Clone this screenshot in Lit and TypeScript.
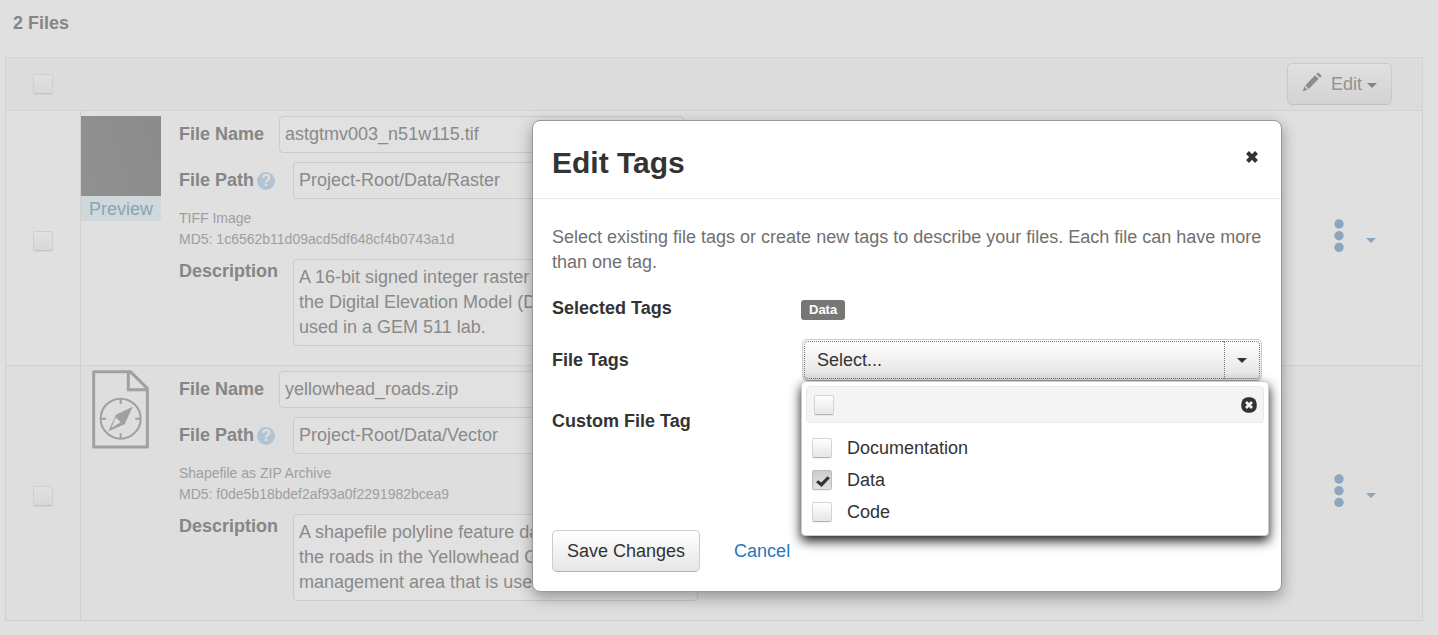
import { LitElement, html, css, svg } from "lit";
import { customElement, property, state } from "lit/decorators.js";
import { classMap } from "lit/directives/class-map.js";

interface FileEntry {
  id: string;
  name: string;
  path: string;
  format: string;
  md5: string;
  description: string;
  image: boolean;
}

const FILES: FileEntry[] = [
  {
    id: "raster",
    name: "astgtmv003_n51w115.tif",
    path: "Project-Root/Data/Raster",
    format: "TIFF Image",
    md5: "1c6562b11d09acd5df648cf4b0743a1d",
    description:
      "A 16-bit signed integer raster representing\nthe Digital Elevation Model (DEM) that is\nused in a GEM 511 lab.",
    image: true,
  },
  {
    id: "vector",
    name: "yellowhead_roads.zip",
    path: "Project-Root/Data/Vector",
    format: "Shapefile as ZIP Archive",
    md5: "f0de5b18bdef2af93a0f2291982bcea9",
    description:
      "A shapefile polyline feature dataset of\nthe roads in the Yellowhead Green\nmanagement area that is used in a lab.",
    image: false,
  },
];

const controls = css`
  * {
    box-sizing: border-box;
  }
  button,
  input,
  textarea {
    font: inherit;
    color: inherit;
    margin: 0;
  }
  .check {
    appearance: none;
    display: block;
    flex: none;
    width: 20px;
    height: 20px;
    border: 1px solid #d4d4d4;
    border-bottom-color: #b4b4b4;
    border-radius: 2px;
    background: linear-gradient(#ffffff, #e6e6e6);
    box-shadow: 0 1px 1px rgba(0, 0, 0, 0.05);
  }
  .check:checked {
    background: linear-gradient(#cccccc, #e2e2e2);
    border-color: #bcbcbc;
  }
  .check:checked::after {
    content: "";
    display: block;
    width: 14px;
    height: 11px;
    margin: 5px 0 0 3px;
    background: #333333;
    clip-path: polygon(0 56%, 16% 38%, 38% 58%, 82% 2%, 100% 18%, 40% 100%);
  }
  .caret {
    display: block;
    border: 5px solid transparent;
    border-top-color: currentColor;
    border-bottom: 0;
  }
`;

@customElement("file-table")
class FileTable extends LitElement {
  @property({ attribute: false }) files: FileEntry[] = [];

  static styles = [
    controls,
    css`
      :host {
        display: block;
      }
      .table {
        width: 100%;
        border-collapse: collapse;
        color: #888888;
      }
      .head,
      .row {
        border: 1px solid #d3d3d3;
      }
      .head {
        background: #dcdcdc;
        height: 53px;
      }
      .row:nth-child(even) {
        background: #dedede;
      }
      .row {
        border-color: #d0d0d0;
      }
      .cell {
        padding: 0;
        vertical-align: middle;
        text-align: left;
        font-weight: normal;
      }
      .cell-check {
        width: 75px;
      }
      .row .cell-check {
        border-right: 1px solid #d0d0d0;
        padding-top: 6px;
      }
      .check {
        margin: 0 auto;
        border-color: #cfcfcf;
        border-bottom-color: #c4c4c4;
        background: linear-gradient(#e1e1e1, #d8d8d8);
      }
      .cell-actions {
        width: 140px;
      }
      .row .cell-actions {
        padding-bottom: 4px;
      }
      .edit {
        display: flex;
        align-items: center;
        width: 105px;
        height: 42px;
        margin: 0 30px 0 auto;
        padding: 0 14px;
        border: 1px solid #cacaca;
        border-bottom-color: #c0c0c0;
        border-radius: 5px;
        background: linear-gradient(#e0e0e0, #d3d3d3);
        color: #929292;
      }
      .pencil {
        width: 20px;
        height: 20px;
        margin: 0 9px 4px 0;
        fill: #8c8c8c;
      }
      .edit .caret {
        margin: 2px 0 0 5px;
        color: #858585;
      }
      .menu {
        display: flex;
        align-items: center;
        gap: 22px;
        margin: 0 46px 0 auto;
        padding: 0;
        border: 0;
        background: none;
        color: #8ba6bf;
      }
      .menu .caret {
        margin-top: 9px;
      }
      .dots {
        width: 10px;
        height: 34px;
        fill: currentColor;
      }
      .entry {
        display: flex;
        gap: 18px;
        padding: 5px 0 19px;
      }
      .thumb {
        width: 80px;
        flex: none;
      }
      .picture {
        height: 80px;
        background: linear-gradient(70deg, #919191, #8b8b8b);
      }
      .preview {
        display: block;
        height: 25px;
        line-height: 26px;
        text-align: center;
        text-decoration: none;
        background: #cfd8db;
        color: #89a5b4;
      }
      .doc {
        display: block;
        width: 57px;
        height: 79px;
        margin: -1px auto 0 11px;
        fill: none;
        stroke: #a0a0a0;
      }
      .solid {
        fill: #a0a0a0;
        stroke: none;
      }
      .hole {
        fill: #dedede;
        stroke: none;
      }
      .line {
        display: flex;
        align-items: center;
        gap: 15px;
        margin-bottom: 9px;
      }
      .line-top {
        align-items: flex-start;
        margin: 9px 0 0;
      }
      .label {
        font-weight: bold;
        color: #868686;
      }
      .labelled {
        display: flex;
        align-items: center;
        gap: 3px;
        padding-right: 3px;
      }
      .help {
        display: grid;
        place-items: center;
        width: 18px;
        height: 18px;
        padding: 0;
        border: 0;
        border-radius: 50%;
        background: #b3c3d2;
        color: #e0e0e0;
        font-size: 16px;
        line-height: 18px;
        font-weight: bold;
      }
      .box {
        width: 405px;
        height: 37px;
        padding: 0 5px;
        border: 1px solid #cbcbcb;
        border-radius: 4px;
        background: #e1e1e1;
        color: #8a8a8a;
      }
      .area {
        display: block;
        height: 87px;
        padding: 5px;
        line-height: 25px;
        resize: none;
        overflow: hidden;
        white-space: pre;
      }
      .meta {
        margin: 0;
        font-size: 14px;
        line-height: 21px;
        color: #9e9e9e;
      }
    `,
  ];

  private thumb(file: FileEntry) {
    if (file.image) {
      return html`<div class="picture" role="img" aria-label=${file.name}></div>
        <a class="preview" href="#preview">Preview</a>`;
    }
    return html`<svg class="doc" viewBox="0 0 171 237" aria-hidden="true">
      ${svg`
        <path d="M5 5H115L166 55V231H5Z" stroke-width="9" stroke-linejoin="round" />
        <path d="M109 5V59H166" stroke-width="9" />
        <circle cx="86" cy="146" r="60" stroke-width="6" />
        <path d="M86 88V102M86 190V204M28 146H42M130 146H144" stroke-width="6" />
        <path class="solid" d="M122 110L98 163L49 184L72 134Z" />
        <path class="hole" d="M71 142L86 157L58 174Z" />
      `}
    </svg>`;
  }

  private row(file: FileEntry) {
    return html`<tr class="row">
      <td class="cell cell-check">
        <input class="check" type="checkbox" aria-label="Select ${file.name}" />
      </td>
      <td class="cell">
        <div class="entry">
          <div class="thumb">${this.thumb(file)}</div>
          <div>
            <div class="line">
              <label class="label" for="name-${file.id}">File Name</label>
              <input class="box" id="name-${file.id}" type="text" .value=${file.name} />
            </div>
            <div class="line">
              <div class="labelled">
                <label class="label" for="path-${file.id}">File Path</label>
                <button class="help" type="button">?</button>
              </div>
              <input class="box" id="path-${file.id}" type="text" .value=${file.path} />
            </div>
            <p class="meta">${file.format}</p>
            <p class="meta">MD5: ${file.md5}</p>
            <div class="line line-top">
              <label class="label" for="text-${file.id}">Description</label>
              <textarea class="box area" id="text-${file.id}" .value=${file.description}></textarea>
            </div>
          </div>
        </div>
      </td>
      <td class="cell cell-actions">
        <button class="menu" type="button" aria-label="Actions for ${file.name}">
          <svg class="dots" viewBox="0 0 10 34" aria-hidden="true">
            <circle cx="5" cy="5" r="4.7" />
            <circle cx="5" cy="16.7" r="4.7" />
            <circle cx="5" cy="28.4" r="4.7" />
          </svg>
          <span class="caret"></span>
        </button>
      </td>
    </tr>`;
  }

  render() {
    return html`<table class="table">
      <thead>
        <tr class="head">
          <th class="cell cell-check" scope="col">
            <input class="check" type="checkbox" aria-label="Select all files" />
          </th>
          <th class="cell" scope="col"></th>
          <th class="cell cell-actions" scope="col">
            <button class="edit" type="button">
              <svg class="pencil" viewBox="0 0 20 20" aria-hidden="true">
                <path d="M13 3.3L16.7 6.8L6.8 17L3.3 13.4Z" />
                <path d="M14.2 2L15.6 0.8Q16.2 0.6 16.8 1.1L19 3.3Q19.6 4 19.2 4.6L18 5.8Z" />
                <path d="M2.3 14.6L5.6 17.8L0.8 19.2Z" />
              </svg>
              <span>Edit</span>
              <span class="caret"></span>
            </button>
          </th>
        </tr>
      </thead>
      <tbody>
        ${this.files.map((file) => this.row(file))}
      </tbody>
    </table>`;
  }
}

@customElement("tag-dialog")
class TagDialog extends LitElement {
  @state() private tags = [
    { name: "Documentation", on: false },
    { name: "Data", on: true },
    { name: "Code", on: false },
  ];
  @state() private open = true;

  static styles = [
    controls,
    css`
      :host {
        display: block;
      }
      .dialog {
        border: 1px solid #999999;
        border-radius: 8px;
        background: #ffffff;
        box-shadow: 0 5px 15px rgba(0, 0, 0, 0.35);
        color: #333333;
      }
      .header {
        display: flex;
        justify-content: space-between;
        align-items: flex-start;
        height: 78px;
        padding: 24px 19px 0;
        border-bottom: 1px solid #e9e9e9;
      }
      .title {
        margin: 0;
        font-size: 30px;
        line-height: 36px;
      }
      .close {
        display: block;
        padding: 3px;
        margin-top: 2px;
        border: 0;
        background: none;
      }
      .cross {
        display: block;
        width: 14px;
        height: 14px;
        fill: none;
        stroke: #333333;
        stroke-width: 4;
      }
      .body {
        padding: 26px 19px 19px;
      }
      .hint {
        margin: 0 0 21px;
        color: #707070;
      }
      .field {
        display: grid;
        grid-template-columns: 249px 1fr;
        align-items: center;
      }
      .name {
        font-weight: bold;
      }
      .badge {
        display: inline-block;
        height: 20px;
        margin-top: 4px;
        padding: 0 8px;
        border-radius: 3px;
        background: #777777;
        color: #ffffff;
        font-size: 13px;
        line-height: 20px;
        font-weight: bold;
        vertical-align: top;
      }
      .picker {
        position: relative;
        margin-top: 18px;
        padding-left: 1px;
      }
      .split {
        display: flex;
        height: 42px;
        padding: 1px;
        border: 1px solid #cccccc;
        border-bottom-color: #a8a8a8;
        border-radius: 5px;
        background: linear-gradient(#ffffff, #e2e2e2);
      }
      .current,
      .toggle {
        border: 1px dotted #777777;
        background: none;
      }
      .current {
        flex: 1;
        padding: 0 12px;
        border-right: 0;
        border-radius: 4px 0 0 4px;
        text-align: left;
      }
      .toggle {
        display: grid;
        place-items: center;
        width: 36px;
        padding: 0;
        border-radius: 0 4px 4px 0;
      }
      .file-tags .name {
        margin-top: 18px;
      }
      .panel {
        position: absolute;
        top: 42px;
        left: 0;
        right: -7px;
        padding: 4px 4px 7px;
        border: 1px solid #cccccc;
        border-radius: 4px;
        background: #ffffff;
        box-shadow: 0 5px 12px rgba(0, 0, 0, 0.9);
      }
      .panel-head {
        display: flex;
        align-items: center;
        justify-content: space-between;
        height: 37px;
        padding: 0 6px 0 7px;
        border: 1px solid #e9e9e9;
        border-radius: 4px;
        background: #f4f4f4;
      }
      .dismiss {
        display: block;
        padding: 0;
        border: 0;
        background: none;
      }
      .disc {
        display: block;
        width: 16px;
        height: 16px;
      }
      .options {
        margin: 9px 0 0;
        padding: 0 6px;
        list-style: none;
      }
      .option {
        display: flex;
        align-items: center;
        gap: 15px;
        height: 32px;
      }
      .custom {
        margin: 22px 0 90px;
      }
      .custom-input {
        width: 100%;
        height: 37px;
        padding: 0 5px;
        border: 1px solid #cccccc;
        border-radius: 4px;
      }
      .footer {
        display: flex;
        align-items: center;
        gap: 34px;
      }
      .save {
        height: 42px;
        padding: 0 14px;
        border: 1px solid #cccccc;
        border-bottom-color: #b3b3b3;
        border-radius: 5px;
        background: linear-gradient(#ffffff, #e6e6e6);
      }
      .cancel {
        color: #2a76b8;
        text-decoration: none;
      }
      .hidden {
        display: none;
      }
    `,
  ];

  private toggleTag(name: string) {
    this.tags = this.tags.map((t) => (t.name === name ? { ...t, on: !t.on } : t));
  }

  private togglePanel = () => {
    this.open = !this.open;
  };

  render() {
    return html`<section class="dialog" role="dialog" aria-labelledby="title">
      <header class="header">
        <h1 class="title" id="title">Edit Tags</h1>
        <button class="close" type="button" aria-label="Close">
          <svg class="cross" viewBox="0 0 14 14" aria-hidden="true">
            <path d="M2.5 2.5L11.5 11.5M11.5 2.5L2.5 11.5" />
          </svg>
        </button>
      </header>
      <form class="body">
        <p class="hint">
          Select existing file tags or create new tags to describe your files. Each file can have
          more than one tag.
        </p>
        <div class="field">
          <span class="name">Selected Tags</span>
          <div>
            ${this.tags.filter((t) => t.on).map((t) => html`<span class="badge">${t.name}</span>`)}
          </div>
        </div>
        <div class="field file-tags">
          <label class="name" for="current">File Tags</label>
          <div class="picker">
            <div class="split">
              <button class="current" id="current" type="button" @click=${this.togglePanel}>
                Select...
              </button>
              <button
                class="toggle"
                type="button"
                aria-label="Toggle file tags"
                aria-expanded=${this.open}
                @click=${this.togglePanel}
              >
                <span class="caret"></span>
              </button>
            </div>
            <div class=${classMap({ panel: true, hidden: !this.open })}>
              <div class="panel-head">
                <input class="check" type="checkbox" aria-label="Select all tags" />
                <button
                  class="dismiss"
                  type="button"
                  aria-label="Close list"
                  @click=${this.togglePanel}
                >
                  <svg class="disc" viewBox="0 0 16 16" aria-hidden="true">
                    <rect x="0.3" y="0.3" width="15.4" height="15.4" rx="6.5" fill="#333333" />
                    <path
                      d="M5 5L11 11M11 5L5 11"
                      stroke="#f4f4f4"
                      stroke-width="2.8"
                      fill="none"
                    />
                  </svg>
                </button>
              </div>
              <ul class="options">
                ${this.tags.map(
                  (t) => html`<li>
                    <label class="option">
                      <input
                        class="check"
                        type="checkbox"
                        .checked=${t.on}
                        @change=${() => this.toggleTag(t.name)}
                      />
                      <span>${t.name}</span>
                    </label>
                  </li>`,
                )}
              </ul>
            </div>
          </div>
        </div>
        <div class="field custom">
          <label class="name" for="custom">Custom File Tag</label>
          <input class="custom-input" id="custom" type="text" />
        </div>
        <div class="footer">
          <button class="save" type="button">Save Changes</button>
          <a class="cancel" href="#cancel">Cancel</a>
        </div>
      </form>
    </section>`;
  }
}

@customElement("app-root")
class AppRoot extends LitElement {
  static styles = css`
    :host {
      display: block;
      position: relative;
      box-sizing: border-box;
      min-height: 100vh;
      padding: 11px 15px 14px 5px;
      background: #e0e0e0;
      font-family: "Liberation Sans", Arial, sans-serif;
      font-size: 18px;
      line-height: 25px;
    }
    .count {
      margin: 0 0 21px;
      padding-left: 8px;
      font-size: 18px;
      line-height: 25px;
      color: #868686;
    }
    .overlay {
      position: absolute;
      top: 120px;
      right: 156px;
      width: 750px;
    }
  `;

  render() {
    return html`<h2 class="count">2 Files</h2>
      <file-table .files=${FILES}></file-table>
      <tag-dialog class="overlay"></tag-dialog>`;
  }
}
